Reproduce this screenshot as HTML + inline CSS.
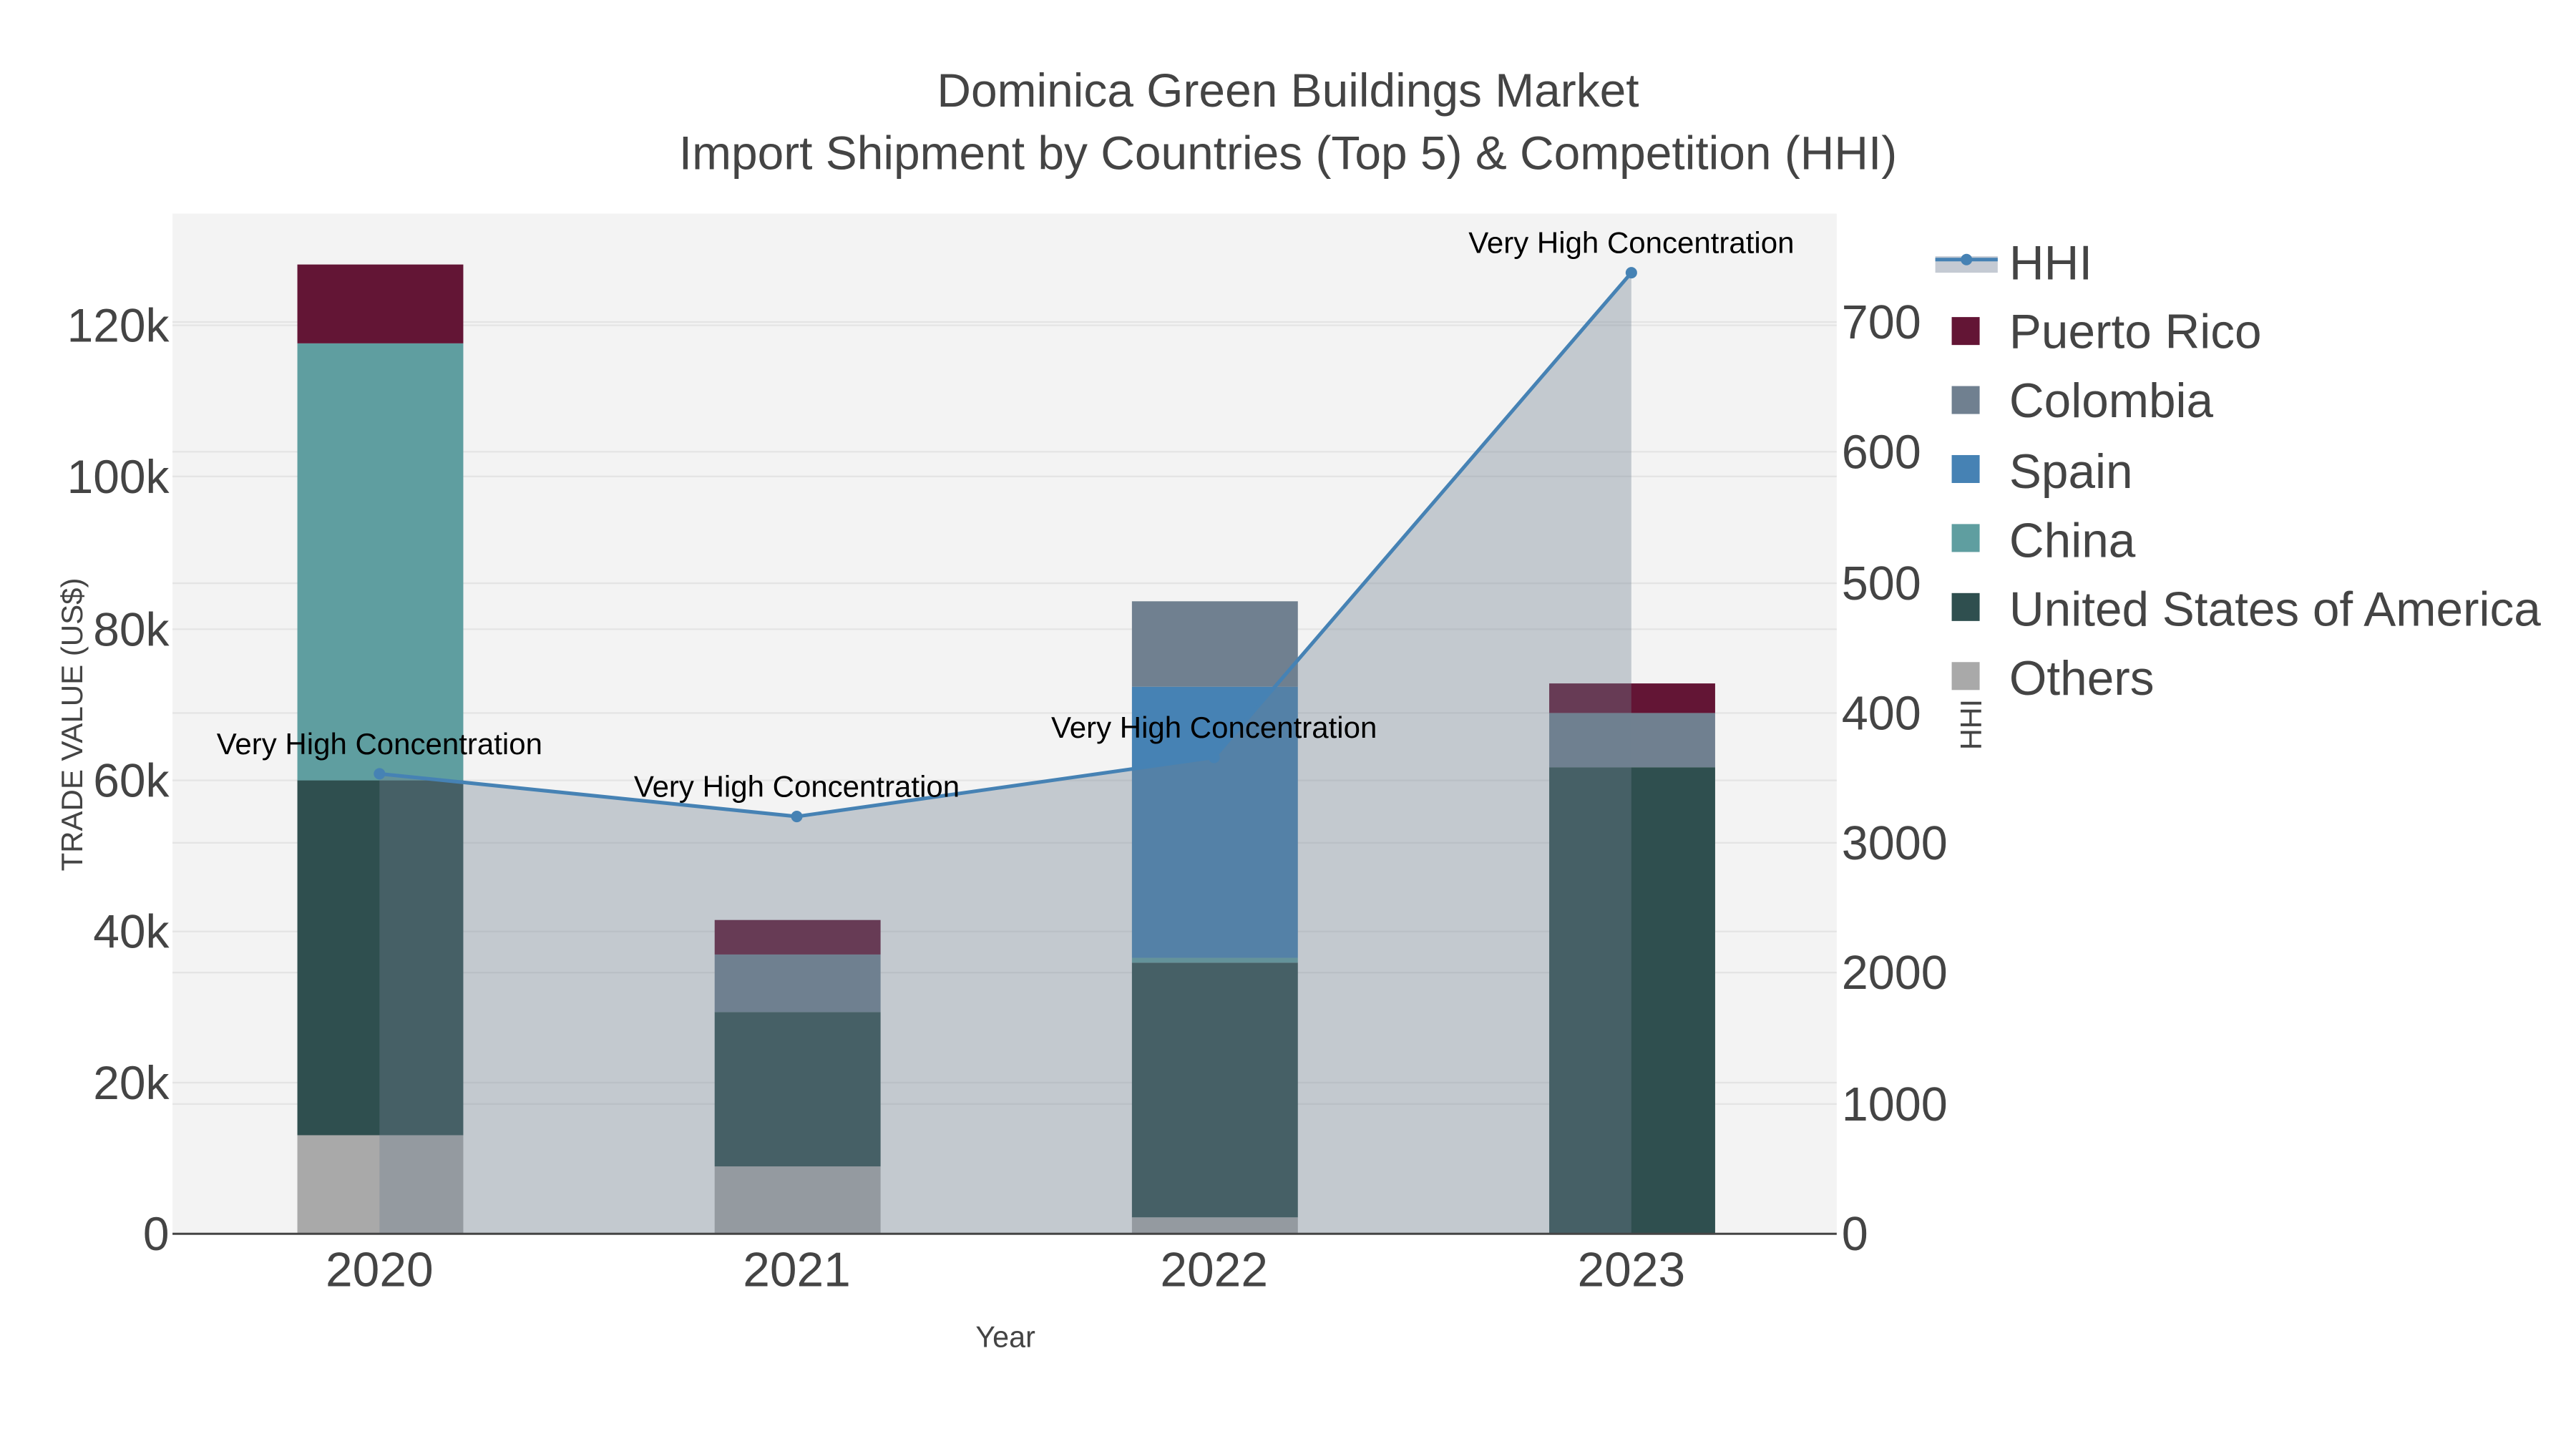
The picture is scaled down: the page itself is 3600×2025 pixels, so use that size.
<!DOCTYPE html>
<html><head><meta charset="utf-8"><style>html,body{margin:0;padding:0;background:#fff}svg{display:block}text{font-family:"Liberation Sans",sans-serif}</style></head>
<body>
<svg width="3600" height="2025" viewBox="0 0 1568 882" xmlns="http://www.w3.org/2000/svg">
<rect x="0" y="0" width="1568" height="882" fill="#fff"/>
<rect x="105" y="130" width="1013" height="621" fill="#f3f3f3"/>
<g stroke="#e4e4e4" stroke-width="1">
<line x1="105" x2="1118" y1="198" y2="198"/><line x1="105" x2="1118" y1="290" y2="290"/><line x1="105" x2="1118" y1="383" y2="383"/><line x1="105" x2="1118" y1="475" y2="475"/><line x1="105" x2="1118" y1="567" y2="567"/><line x1="105" x2="1118" y1="659" y2="659"/>
<line x1="105" x2="1118" y1="196" y2="196"/><line x1="105" x2="1118" y1="275" y2="275"/><line x1="105" x2="1118" y1="355" y2="355"/><line x1="105" x2="1118" y1="434" y2="434"/><line x1="105" x2="1118" y1="513" y2="513"/><line x1="105" x2="1118" y1="592" y2="592"/><line x1="105" x2="1118" y1="672" y2="672"/>
</g>
<rect x="181" y="691" width="101" height="60" fill="#a9a9a9"/>
<rect x="181" y="475" width="101" height="216" fill="#2f4f4f"/>
<rect x="181" y="209" width="101" height="266" fill="#5f9ea0"/>
<rect x="181" y="161" width="101" height="48" fill="#631535"/>
<rect x="435" y="710" width="101" height="41" fill="#a9a9a9"/>
<rect x="435" y="616" width="101" height="94" fill="#2f4f4f"/>
<rect x="435" y="581" width="101" height="35" fill="#708090"/>
<rect x="435" y="560" width="101" height="21" fill="#631535"/>
<rect x="689" y="741" width="101" height="10" fill="#a9a9a9"/>
<rect x="689" y="586" width="101" height="155" fill="#2f4f4f"/>
<rect x="689" y="583" width="101" height="3" fill="#5f9ea0"/>
<rect x="689" y="418" width="101" height="165" fill="#4682b4"/>
<rect x="689" y="366" width="101" height="52" fill="#708090"/>
<rect x="943" y="467" width="101" height="284" fill="#2f4f4f"/>
<rect x="943" y="434" width="101" height="33" fill="#708090"/>
<rect x="943" y="416" width="101" height="18" fill="#631535"/>
<polygon points="231,471 485,497 739,461 993,166 993,751 231,751" fill="rgba(112,128,144,0.36)"/>
<polyline points="231,471 485,497 739,461 993,166" fill="none" stroke="#4682b4" stroke-width="2.2"/>
<g fill="#4682b4"><circle cx="231" cy="471" r="3.5"/><circle cx="485" cy="497" r="3.5"/><circle cx="739" cy="461" r="3.5"/><circle cx="993" cy="166" r="3.5"/></g>
<line x1="105" x2="1118" y1="751" y2="751" stroke="#444" stroke-width="1.3"/>
<g font-size="18.3" fill="#000" text-anchor="middle">
<text x="231" y="459">Very High Concentration</text>
<text x="485" y="485">Very High Concentration</text>
<text x="739" y="449">Very High Concentration</text>
<text x="993" y="154">Very High Concentration</text>
</g>
<g font-size="28.7" fill="#444" text-anchor="middle">
<text x="784" y="65">Dominica Green Buildings Market</text>
<text x="784" y="103">Import Shipment by Countries (Top 5) &amp; Competition (HHI)</text>
</g>
<g font-size="28.7" fill="#444" text-anchor="end">
<text x="103" y="208">120k</text><text x="103" y="300">100k</text><text x="103" y="393">80k</text><text x="103" y="485">60k</text><text x="103" y="577">40k</text><text x="103" y="669">20k</text><text x="103" y="761">0</text>
</g>
<g font-size="29" fill="#444">
<text x="1121" y="206">700</text><text x="1121" y="285">600</text><text x="1121" y="365">500</text><text x="1121" y="444">400</text><text x="1121" y="523">3000</text><text x="1121" y="602">2000</text><text x="1121" y="682">1000</text><text x="1121" y="761">0</text>
</g>
<g font-size="29.5" fill="#444" text-anchor="middle">
<text x="231" y="783">2020</text><text x="485" y="783">2021</text><text x="739" y="783">2022</text><text x="993" y="783">2023</text>
</g>
<text x="612" y="820" font-size="18" fill="#444" text-anchor="middle">Year</text>
<text transform="translate(50,441) rotate(-90)" font-size="18.3" fill="#444" text-anchor="middle">TRADE VALUE (US$)</text>
<text transform="translate(1206,441) rotate(-90)" font-size="18" fill="#444" text-anchor="middle">HHI</text>
<rect x="1178" y="156" width="38" height="10" fill="rgba(190,196,206,0.9)"/>
<line x1="1178" x2="1216" y1="158" y2="158" stroke="#4682b4" stroke-width="2.2"/>
<circle cx="1197" cy="158" r="3.5" fill="#4682b4"/>
<rect x="1188" y="193" width="17" height="17" fill="#631535"/>
<rect x="1188" y="235" width="17" height="17" fill="#708090"/>
<rect x="1188" y="277" width="17" height="17" fill="#4682b4"/>
<rect x="1188" y="319" width="17" height="17" fill="#5f9ea0"/>
<rect x="1188" y="361" width="17" height="17" fill="#2f4f4f"/>
<rect x="1188" y="403" width="17" height="17" fill="#a9a9a9"/>
<g font-size="29.4" fill="#444">
<text x="1223" y="170">HHI</text>
<text x="1223" y="212">Puerto Rico</text>
<text x="1223" y="254">Colombia</text>
<text x="1223" y="297">Spain</text>
<text x="1223" y="339">China</text>
<text x="1223" y="381">United States of America</text>
<text x="1223" y="423">Others</text>
</g>
</svg>
</body></html>
